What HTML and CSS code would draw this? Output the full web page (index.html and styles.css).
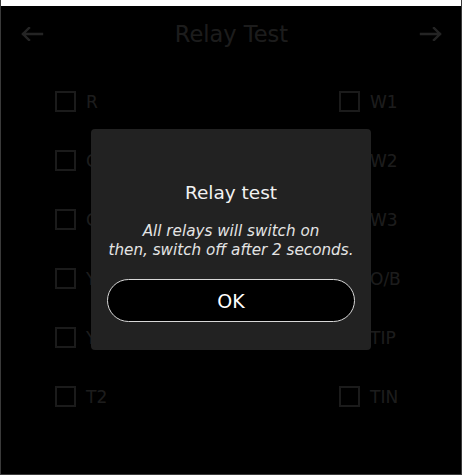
FILE: index.html
```html
<!DOCTYPE html>
<html lang="en">
<head>
<meta charset="utf-8">
<title>Relay Test</title>
<link rel="stylesheet" href="styles.css">
</head>
<body>
<div class="frame">
  <div class="topstrip"></div>
  <header class="header">
    <svg class="arrow" viewBox="0 0 24 14" width="24" height="14"><path d="M22 7H3M9 1L3 7l6 6" fill="none" stroke="currentColor" stroke-width="2.4" stroke-linecap="square"/></svg>
    <h1 class="title">Relay Test</h1>
    <svg class="arrow" viewBox="0 0 24 14" width="24" height="14"><path d="M2 7h19M15 1l6 6-6 6" fill="none" stroke="currentColor" stroke-width="2.4" stroke-linecap="square"/></svg>
  </header>
  <main class="relays">
    <label class="relay"><span class="box"></span>R</label>
    <label class="relay"><span class="box"></span>W1</label>
    <label class="relay"><span class="box"></span>C</label>
    <label class="relay"><span class="box"></span>W2</label>
    <label class="relay"><span class="box"></span>G</label>
    <label class="relay"><span class="box"></span>W3</label>
    <label class="relay"><span class="box"></span>Y1</label>
    <label class="relay"><span class="box"></span>O/B</label>
    <label class="relay"><span class="box"></span>Y2</label>
    <label class="relay"><span class="box"></span>TIP</label>
    <label class="relay"><span class="box"></span>T2</label>
    <label class="relay"><span class="box"></span>TIN</label>
  </main>
  <div class="backdrop"></div>
  <div class="dialog">
    <h2 class="dialog-title">Relay test</h2>
    <p class="dialog-text">All relays will switch on<br>then, switch off after 2 seconds.</p>
    <button class="ok">OK</button>
  </div>
</div>
</body>
</html>
```
FILE: styles.css
```css
html, body {
  margin: 0;
  padding: 0;
  background: #000;
}
body {
  font-family: "DejaVu Sans", "Open Sans", sans-serif;
  width: 462px;
  height: 475px;
  overflow: hidden;
}
.frame {
  position: relative;
  box-sizing: border-box;
  width: 462px;
  height: 475px;
  border-left: 1px solid #3a3a3a;
  border-right: 1px solid #3a3a3a;
  border-bottom: 1px solid #3a3a3a;
  background: #000;
  overflow: hidden;
}
.topstrip {
  height: 6px;
  background: #fff;
}
.header {
  height: 56px;
  display: flex;
  align-items: center;
  justify-content: space-between;
  padding: 0 18px 0 19px;
  color: #fff;
}
.arrow { display: block; }
.title {
  margin: 0;
  font-size: 22.5px;
  font-weight: 400;
  color: #c8c8c8;
}
.relays {
  display: grid;
  grid-template-columns: 284px 1fr;
  grid-auto-rows: 59px;
  padding: 10px 0 0 54px;
}
.relay {
  display: flex;
  align-items: center;
  gap: 10px;
  font-size: 17px;
  color: #c8c8c8;
}
.box {
  box-sizing: border-box;
  width: 21px;
  height: 21px;
  border: 2px solid #c0c0c0;
}
.backdrop {
  position: absolute;
  left: 0;
  right: 0;
  top: 6px;
  bottom: 0;
  background: rgba(0, 0, 0, 0.86);
}
.dialog {
  position: absolute;
  left: 90px;
  top: 129px;
  width: 280px;
  height: 221px;
  box-sizing: border-box;
  background: #222;
  border-radius: 4px;
  padding: 52px 16px 0;
  display: flex;
  flex-direction: column;
  align-items: center;
  text-align: center;
}
.dialog-title {
  margin: 0;
  font-size: 18.5px;
  line-height: 24px;
  font-weight: 400;
  color: #f2f2f2;
}
.dialog-text {
  margin: 17px 0 19px;
  font-size: 15.2px;
  line-height: 19px;
  font-style: italic;
  color: #e4e4e4;
  white-space: nowrap;
}
.ok {
  width: 248px;
  height: 43px;
  box-sizing: border-box;
  background: #000;
  border: 1px solid #d8d8d8;
  border-radius: 22px;
  color: #fff;
  font-family: inherit;
  font-size: 19px;
  padding: 0;
}
```
